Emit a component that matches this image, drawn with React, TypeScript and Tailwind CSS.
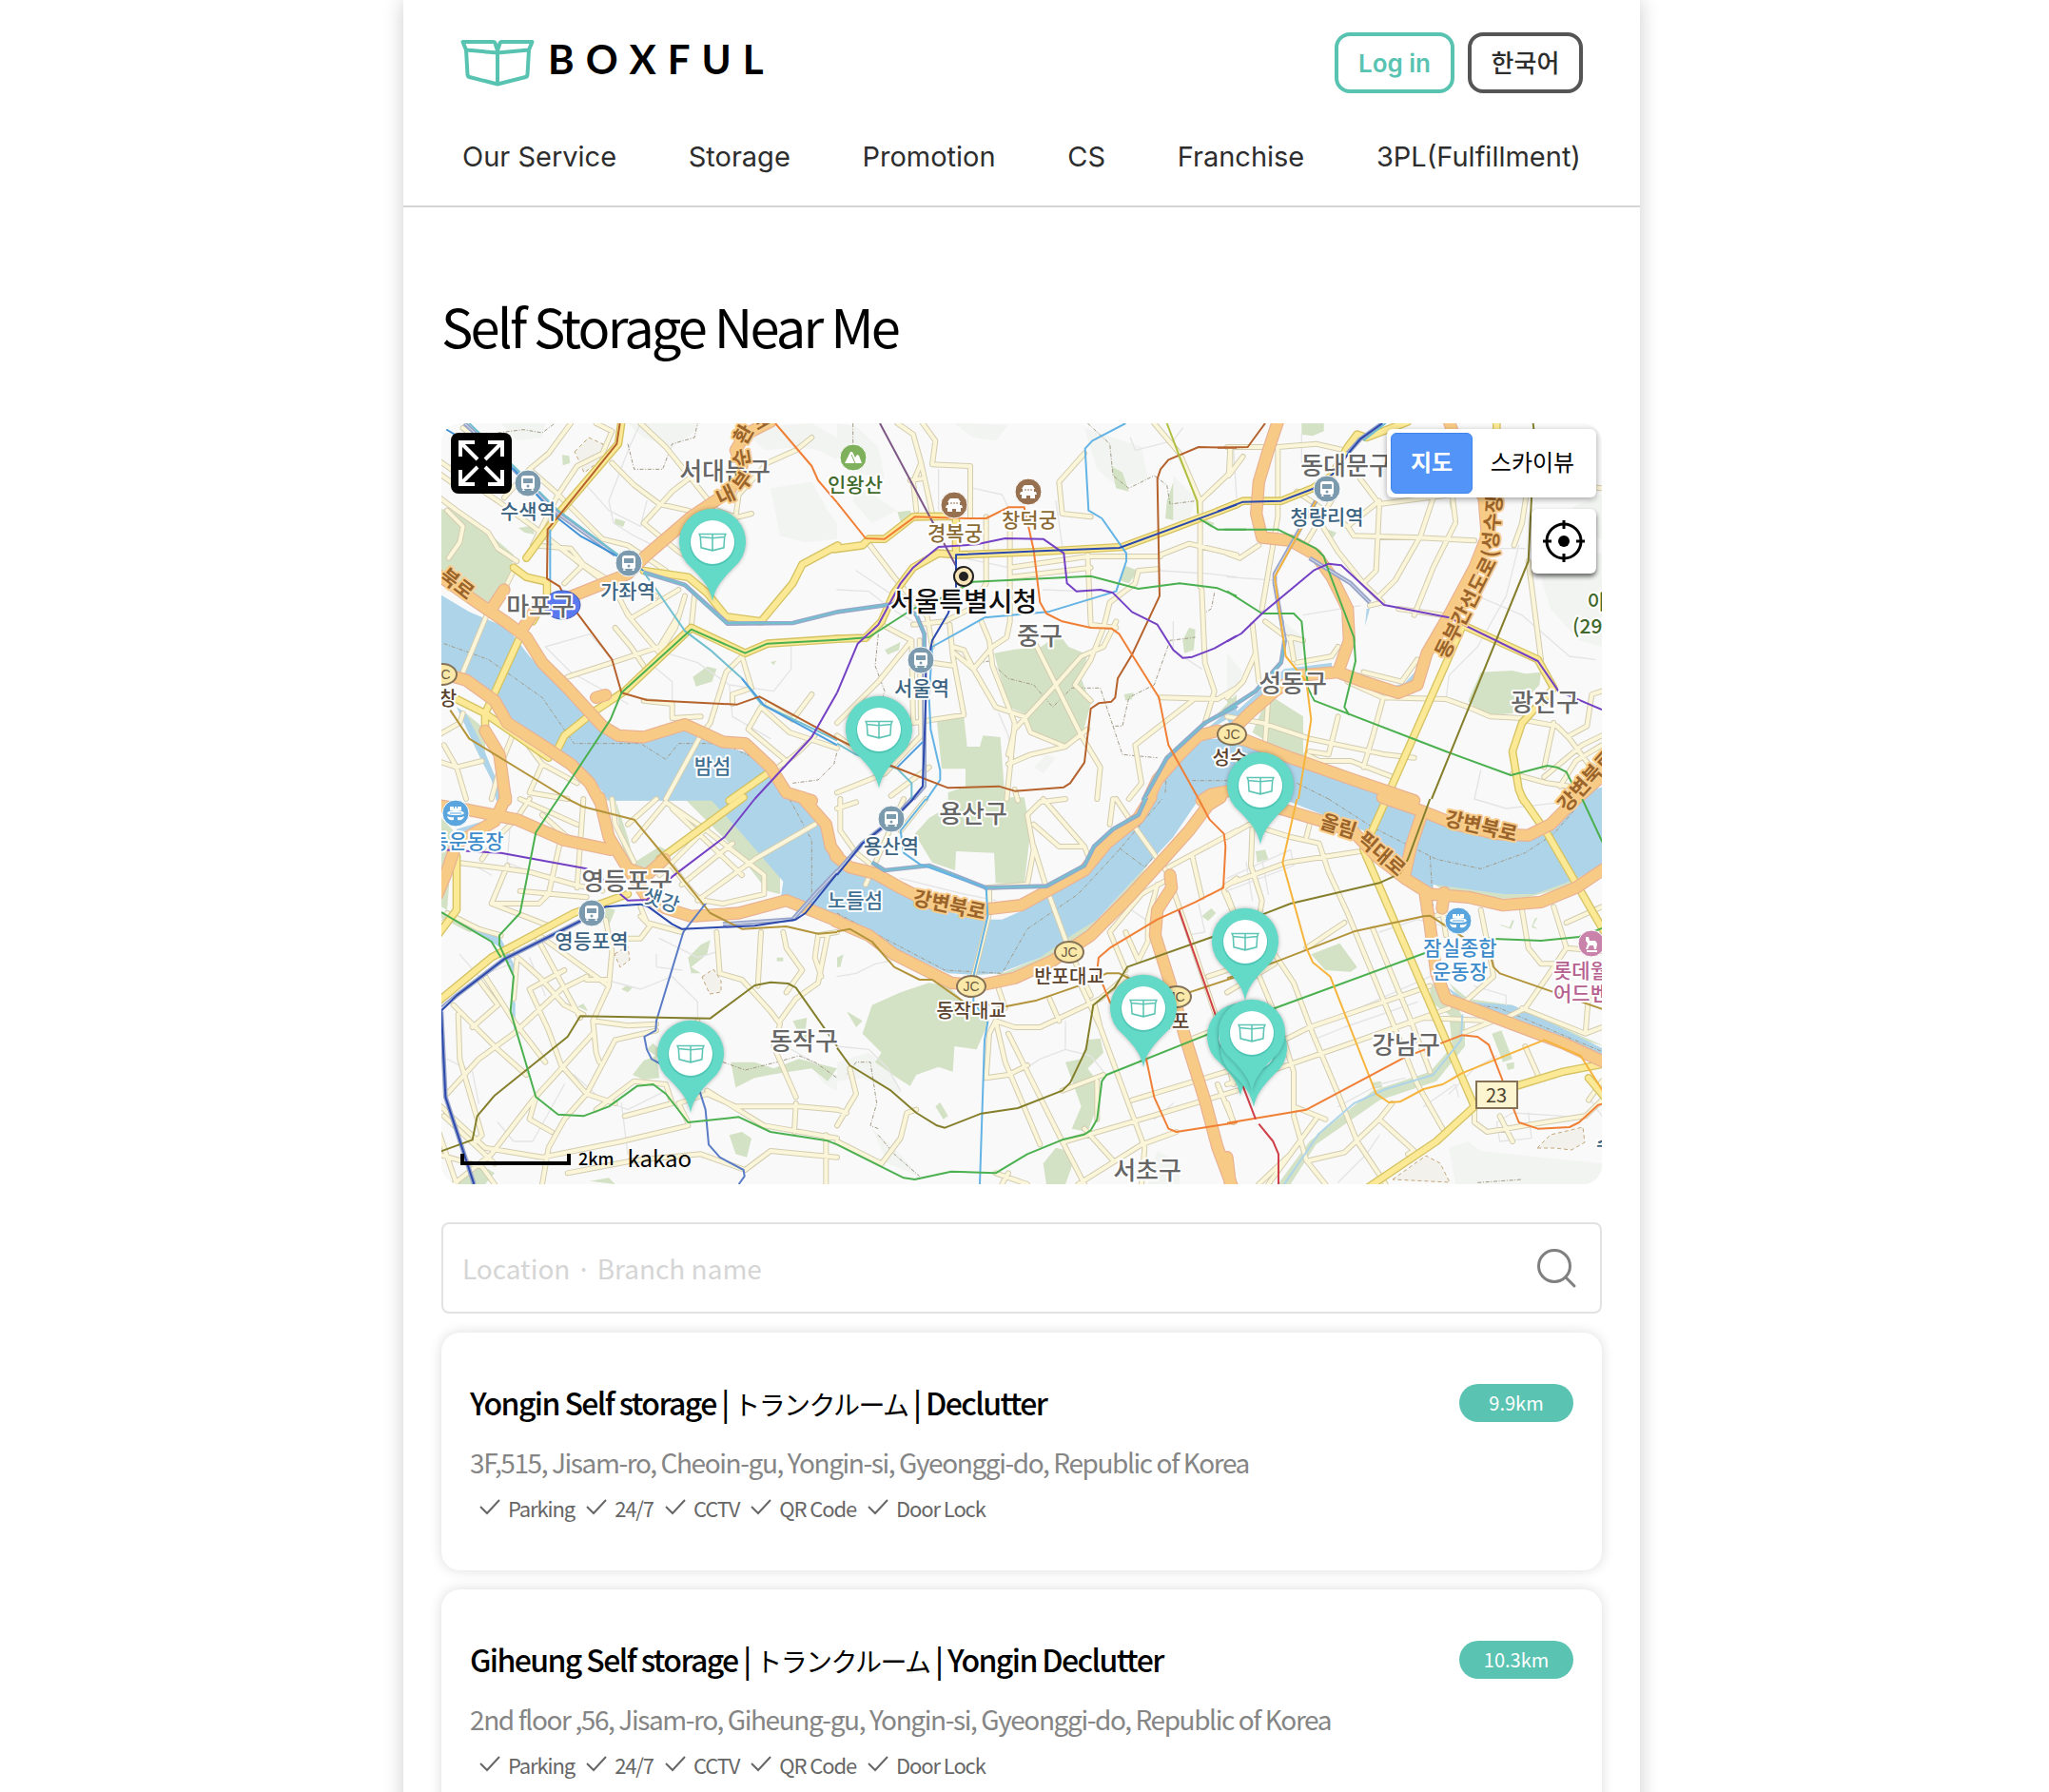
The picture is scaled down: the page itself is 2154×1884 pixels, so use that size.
import { useState } from 'react';

interface Tile {
  x: number;
  y: number;
  water?: string[];
  parks?: string[];
  hills?: string[];
  grey?: string[];
  minor?: string[];
  major?: string[];
  express?: string[];
  rail?: string[];
  dashed?: string[];
  lines?: [string, string][];
}

interface Label {
  text: string;
  x: number;
  y: number;
  kind: 'district' | 'station' | 'junction' | 'palace' | 'hill' | 'sport' | 'park' | 'road' | 'water';
  rotate?: number;
  start?: boolean;
}

interface Branch {
  name: string[];
  address: string;
  distance: string;
  features: string[];
}

const GREEN = '#4bb04f';
const NAVY = '#2c49ad';
const PURPLE = '#7440c4';
const BROWN = '#b5622c';
const SKY = '#63b3e4';
const ORANGE = '#f07f35';
const OLIVE = '#857f2c';
const GOLD = '#b3943a';
const AMBER = '#f6b43c';
const RED = '#cf4048';
const TEAL = '#72c0cf';
const SLATE = '#5a7cc6';

const menu = ['Our Service', 'Storage', 'Promotion', 'CS', 'Franchise', '3PL(Fulfillment)'];

const branches: Branch[] = [
  {
    name: ['Yongin Self storage | ', 'トランクルーム', ' | Declutter'],
    address: '3F,515, Jisam-ro, Cheoin-gu, Yongin-si, Gyeonggi-do, Republic of Korea',
    distance: '9.9km',
    features: ['Parking', '24/7', 'CCTV', 'QR Code', 'Door Lock'],
  },
  {
    name: ['Giheung Self storage | ', 'トランクルーム', ' | Yongin Declutter'],
    address: '2nd floor ,56, Jisam-ro, Giheung-gu, Yongin-si, Gyeonggi-do, Republic of Korea',
    distance: '10.3km',
    features: ['Parking', '24/7', 'CCTV', 'QR Code', 'Door Lock'],
  },
];

// Each tile is drawn at three times its size on the map
const tiles: Tile[] = [
  {
    x: -4,
    y: -5,
    water: [
      'M0 550L100 610 220 660 290 750 420 880 520 980 600 1015 780 985 900 1035 1000 1060 1080 1160 1120 1205 540 1205 500 1150 330 1040 230 960 180 880 90 815 0 790z',
      'M60 910L90 930 140 1030 190 1150 200 1205 185 1205 170 1140 120 1040z',
    ],
    parks: [
      'M0 285L60 290 170 370 240 430 225 540 190 600 110 570 0 470z',
      'M525 1160L560 1145 720 1170 900 1170 940 1205 530 1205z',
      'M290 950L320 945 400 1000 395 1020 360 1005z',
      'M805 815L850 782 880 790 865 830 815 845z',
      'M393 115L415 118 418 140 395 148z',
      'M255 345L300 338 305 365 275 360z',
      'M560 315L592 325 585 342 558 332z',
      'M225 670L260 710 300 780 370 850 420 890 300 770z',
      'M90 930L150 980 150 1100 110 1020z',
      'M1050 768L1068 764 1060 778z',
    ],
    hills: [
      'M960 30L1180 15 1260 60 1260 130 1200 100 1140 90 1030 100z',
      'M1050 220L1180 200 1230 290 1260 330 1260 380 1160 390 1080 370z',
      'M600 15L830 15 800 50 740 90 650 60z',
      'M200 15L340 15 330 60 250 70z',
    ],
    grey: [
      'M640 15L605 90 540 260 555 330 620 370 680 400',
      'M340 720L480 680 560 770 690 730',
      'M690 730L820 770 920 840 1060 860 1115 790 1115 720',
      'M580 860L680 780 740 830 740 900',
      'M340 720L420 800 600 900',
      'M920 840L930 940 1050 1010',
      'M460 200L540 290 640 340 660 260',
    ],
    minor: [
      'M0 130L100 200 190 260 300 340 440 450 560 540 600 620 700 740',
      'M0 170L70 220 160 90 80 30',
      'M0 245L60 290 160 360 190 410 250 450',
      'M30 290L80 340 70 390 35 440',
      'M420 15L350 110 290 160 210 250',
      'M290 160L370 230 440 300 520 380 600 400 720 480',
      'M500 15L550 40 520 110 440 150 380 240 300 400',
      'M550 140L620 210 700 270 790 290 870 330 990 300',
      'M640 15L720 90 800 190 880 290 940 310',
      'M650 330L740 230 830 160',
      'M650 330L760 420 860 480',
      'M1040 140L1130 100 1180 60',
      'M1040 140L950 240 940 310',
      'M400 520L460 460 420 410 300 400',
      'M460 460L540 510 690 560',
      'M760 540L610 630 590 600',
      'M560 660L610 720 650 780',
      'M780 560L750 660 700 740',
      'M810 560L800 660',
      'M410 815L580 760 700 720 760 620',
      'M960 750L910 800 860 960 830 1000 720 1200',
      'M960 750L990 850 930 870 930 900',
      'M650 890L740 900 740 945 830 940',
      'M1020 910L980 980 1100 1080 1060 1110',
      'M1020 910L1110 990 1260 1040',
      'M1180 870L1120 950 1040 900',
      'M1190 1000L1140 1050 1090 1090',
      'M240 480L210 540',
      'M155 620L80 800',
      'M0 1000L70 960 80 930',
      'M0 1080L60 1100 140 1080',
      'M20 1030L60 1100 90 1200',
      'M240 990L200 1090 170 1200',
      'M270 1010L330 1090 290 1180 410 1200',
      'M330 1090L440 1150',
    ],
    major: [
      'M580 10L570 80 390 290 280 440',
      'M240 470L280 500 345 515 345 560 300 640',
      'M255 700L150 930',
      'M60 885L150 930 350 1070',
      'M150 930L150 990',
      'M370 1060L400 1000 500 920 590 860 800 660 970 740 1040 710 1262 695',
      'M650 480L790 500 850 550 910 625 1020 640 1120 520 1150 460 1262 400',
      'M920 1205L1040 1120',
    ],
    express: [
      'M-10 485L110 570 220 645 280 690 330 770 410 850 520 970 570 1000 650 1005 780 965 900 1020 970 1025 1050 1100 1100 1180 1180 1205',
      'M270 660L310 600 400 570 600 490 660 430 800 310 920 230 960 150 940 100 970 50 1050 10',
      'M210 540L170 600',
      'M0 800L90 825 180 890 220 960 330 1030 420 1090 480 1150 510 1205',
      'M150 985L195 1060 215 1205',
      'M500 880L530 872',
    ],
    rail: ['M85 15L240 160 380 300 560 430', 'M650 485L780 525 915 647 1120 645 1262 610'],
    dashed: [
      'M20 710L160 760 330 880 430 1025 640 1025 720 1075 760 1025 900 1025 1040 1090',
      'M600 80L620 160 710 160 740 80 810 60 820 15',
      'M190 45L270 35 330 45 370 15',
      'M1120 1150L1200 1140 1250 1090 1260 1050',
    ],
    lines: [
      [SKY, 'M355 350L355 510'],
      ['#3f92d8', 'M20 30L240 160 380 315 450 370 560 430 650 480'],
      [TEAL, 'M100 15L250 160 380 290 570 430 M650 485L780 525 910 645 1120 645 1260 610'],
      [TEAL, 'M650 485L690 540 780 670 860 730 960 820 1020 900 1260 1015'],
      ['#4f9fe0', 'M960 820L1030 905 1260 1030'],
      [BROWN, 'M575 15L565 80 380 310 347 350 345 505 385 530 400 560 550 760 580 865 660 888 945 902 1015 877 1260 1010'],
      [GOLD, 'M40 920L100 1010 410 1200'],
      [GREEN, 'M1260 698L1040 710 970 740 800 665 580 865 545 950 380 1200'],
      [PURPLE, 'M1000 1200L1180 1005 1260 865'],
      [ORANGE, 'M1065 15L1180 150 1200 195 1260 265'],
    ],
  },
  {
    x: 416,
    y: -5,
    water: ['M1000 1205L1060 1090 1160 1010 1265 1010 1265 1150 1180 1175 1130 1205z', 'M1080 1050L1260 900 1260 930 1160 990z'],
    parks: [
      'M495 740L560 728 640 722 700 680 730 720 790 745 770 820 800 900 770 1010 720 1030 600 990 590 930 540 910z',
      'M315 955L400 940 410 1035 450 1035 460 1000 515 1005 530 1205 350 1205 350 1180 405 1160 405 1105 330 1105z',
      'M865 150L900 170 920 230 880 220z',
      'M1110 660L1130 665 1125 730 1095 740 1090 700z',
      'M910 465L950 480 920 520 890 510z',
      'M190 295L230 290 245 320 200 325z',
      'M905 870L935 865 930 885 910 890z',
      'M1040 260L1060 200 1060 320 1035 315z',
      'M1150 315L1190 330 1180 345z',
      'M1200 930L1260 870 1260 920 1210 940z',
      'M150 730L200 705 195 730 160 745z',
    ],
    hills: [
      'M0 15L60 25 130 90 150 190 60 170 0 120z',
      'M60 210L190 290 110 330 50 260z',
      'M370 15L540 20 500 70 430 60z',
      'M780 30L960 90 980 190 890 220 820 160z',
      'M1060 180L1130 250 1110 330 1060 320z',
      'M620 1100L660 1060 690 1070 650 1120z',
    ],
    grey: [
      'M320 160L320 290',
      'M430 220L520 240 540 280',
      'M690 260L710 400',
      'M925 60L940 100 1060 70 1090 30',
      'M0 540L100 545 170 600 240 640',
      'M60 480L180 560',
      'M400 440L540 470',
      'M1020 480L1180 490 1260 500',
      'M1060 640L1060 730 1150 790',
      'M510 930L540 1000 560 1080',
      'M650 540L780 545',
    ],
    minor: [
      'M190 15L240 50 265 140 300 300',
      'M270 15L310 70 300 145 420 150 420 310',
      'M265 140L240 200 250 290',
      'M230 195L265 190',
      'M100 395L180 500 280 620',
      'M200 560L280 600 300 720',
      'M470 310L470 520 420 600 340 640 240 650',
      'M545 310L545 640 535 690 490 720 430 790 400 730 365 720',
      'M545 470L790 435 1020 435',
      'M550 500L720 480 800 470',
      'M780 110L700 200 710 300 800 310',
      'M790 430L800 650 880 660',
      'M950 480L1010 475',
      'M950 480L940 520 860 580 840 660 800 760 750 840 800 890',
      'M1020 430L1110 395 1260 430',
      'M1000 15L1080 110 1145 260 1145 530',
      'M1240 90L1240 170 1145 260',
      'M1150 540L1160 770 1190 860 1160 960',
      'M1020 880L1200 885 1260 850',
      'M1120 890L1030 960 940 1030 960 1150 920 1200',
      'M620 700L700 860 770 1000 830 1100 820 1200',
      'M840 720L770 750 690 840 560 980 540 1060',
      'M455 640L480 700 490 780 560 960 535 1200',
      'M370 740L430 790 500 910 590 940 610 990 720 1035 790 980',
      'M540 1090L610 1060 720 1035',
      'M355 650L365 750 400 935 300 950',
      'M300 950L240 960 235 700 150 655',
      'M260 700L265 1000 150 1120 0 1180',
      'M0 960L130 830 235 700',
      'M300 770L370 780',
      'M0 1000L80 1060',
      'M170 1190L290 1100',
      'M840 720L880 640',
      'M560 1170L570 1205',
    ],
    major: [
      'M0 695L90 692 140 640 180 550 240 470 320 425 380 430 640 420 900 405 1050 350 1262 270',
      'M-10 412L80 400 100 380 150 380 240 310 370 308',
      'M375 320L375 420',
    ],
    express: ['M980 1205L1010 1140 1080 1060 1140 1000 1200 985 1262 1000', 'M1150 1205L1180 1185 1262 1170'],
    rail: ['M0 610L200 582 250 620 275 680 275 880', 'M965 1205L1040 1070 1160 960 1262 905', 'M275 880L275 1160 240 1200'],
    dashed: [
      'M50 15L50 80',
      'M790 15L860 80 870 180 920 220 1000 180 1040 210 1050 270 1130 260',
      'M130 680L120 780 150 860 130 920',
      'M420 775L480 765 540 820 620 840 680 910 740 850 830 850 870 970 900 970 920 880 1000 840 1050 700 1130 690',
      'M1190 550L1180 600 1150 620',
      'M870 970L900 1060 1010 1070',
      'M1120 1142L1260 1142',
      'M1035 1180L1040 1100',
    ],
    lines: [
      ['#7d5885', 'M135 15L375 465'],
      [TEAL, 'M0 610L200 582 250 620 275 680 275 760'],
      [SKY, 'M910 15L805 70 782 95 793 290 835 315 912 425 912 450 880 545 665 610 465 628 300 720 290 880 295 980 325 1110 325 1140 280 1205'],
      ['#4f9fe0', 'M270 1020L190 1100'],
      [TEAL, 'M0 1025L60 1060 190 1105 235 1150 235 1200'],
      [TEAL, 'M965 1205L1040 1070 1160 960 1260 907'],
      [BROWN, 'M0 1010L170 1095 350 1165 510 1160 560 1175 715 1163 735 1150 780 1085 800 915 825 898 865 893 877 880 885 820 930 745 1017 560 1010 190 1020 160 1045 130 1140 90 1260 92'],
      ['#b0bf3f', 'M1040 15L1080 120 1135 260 1138 300'],
      [GREEN, 'M0 698L100 690 240 600 320 570 380 540 430 515 800 497 950 537 1080 520 1200 535 1260 560'],
      [GREEN, 'M1140 315L1200 350 1290 350'],
      [ORANGE, 'M0 265L90 378 150 380 245 310 410 315 470 315 540 280 590 280 620 415 640 580 660 615 710 640 800 660 865 662 890 680 930 745 1015 880 1045 1030 1140 1200'],
      [PURPLE, 'M0 865L65 710 130 650 200 520 240 470 320 405 440 397 530 378 650 380 715 425 725 520 755 545 830 540 870 550 930 610 1010 650 1060 730 1090 755 1120 752 1190 725 1260 685'],
      [NAVY, 'M235 1205L270 1160 280 880 280 800 300 700 350 615 375 540 375 430 640 418 890 408 1260 272'],
    ],
  },
  {
    x: 826,
    y: -5,
    water: [
      'M-10 1000L60 1010 250 1090 540 1205 200 1205 0 1130z',
      'M0 950L100 860 180 790 330 770 330 790 220 820 110 900 20 980z',
      'M410 800L520 845 560 835 605 785 610 815 570 865 420 830z',
      'M150 560L175 640 185 720 165 770 180 640z',
      'M440 600L450 600 435 655z',
    ],
    parks: [
      'M235 15L305 15 305 40 270 55 235 50z',
      'M760 890L800 800 900 795 940 805 990 800 985 840 900 930 830 935 780 910z',
      'M130 870L240 940 240 1080 190 1060 80 990z',
      'M700 260L712 265 705 290z',
      'M320 350L345 360 335 375 315 365z',
      'M0 880L30 885 20 930 0 920z',
    ],
    hills: ['M990 500L1182 420 1182 720 1110 700 1020 600z', 'M1090 280L1182 240 1182 380 1110 360z', 'M0 740L50 800 20 880 0 860z', 'M180 640L250 700 230 760 190 740z'],
    grey: [
      'M235 50L235 160',
      'M20 90L30 250',
      'M0 500L150 510',
      'M240 620L420 590',
      'M790 560L930 620 1080 750 1160 760',
      'M920 400L880 560 790 720 700 810',
      'M860 410L940 410',
      'M800 1110L780 1200',
      'M700 810L690 890',
    ],
    minor: [
      'M0 90L160 90 280 80 370 100',
      'M10 90L5 180 50 120',
      'M160 90L160 310 110 600',
      'M0 425L40 440 100 400',
      'M420 190L480 270 710 240 720 320',
      'M380 340L400 370 590 375 780 385',
      'M380 340L480 260',
      'M220 230L380 340',
      'M340 240L250 390',
      'M270 290L350 420 430 520 490 580 450 590',
      'M480 270L470 480 430 520',
      'M480 560L530 510 610 370 650 250',
      'M720 330L650 470 590 620',
      'M540 600L680 620',
      'M990 200L1180 220',
      'M950 200L930 330 905 400',
      'M950 450L990 760',
      'M80 650L100 830 120 860',
      'M120 640L200 700 210 760',
      'M200 690L240 700',
      'M220 770L330 750 350 720',
      'M430 800L550 830 600 760',
      'M0 880L50 830 90 740',
      'M380 830L490 880 690 885 760 910 830 940 930 945',
      'M0 940L110 960 260 1010 500 1060 590 1070',
      'M130 880L120 1020',
      'M350 940L320 1060 260 1050',
      'M490 890L460 1000 430 1100',
      'M250 1060L290 1080 390 1080 520 1130',
      'M930 950L1040 970 1080 1010 1140 1090 1182 1110',
      'M1030 960L1000 1100',
      'M1182 860L1150 870 1135 970 1080 1000',
      'M1182 1000L1120 1030 1000 1130',
      'M1182 1030L1100 1080 1050 1160',
      'M900 1120L1010 1150 1080 1160',
    ],
    major: [
      'M-30 293L50 260 170 260 270 220 330 180 380 90 410 50 440 60 570 10',
      'M740 660L510 1180',
      'M740 650L980 760 1030 850 930 960 900 1050 920 1170 935 1205',
      'M850 10L850 40',
    ],
    express: [
      'M0 1000L70 930 150 860 230 810 350 800 385 700 380 600 330 500 280 430 200 385 110 375 92 300 100 200 130 100 160 10',
      'M350 800L430 830 540 865 600 840 630 740 700 620 780 470 820 370 810 250 750 150 700 10',
      'M0 1000L60 1015 200 1070 400 1140 590 1205',
    ],
    rail: ['M490 15L420 65 380 110', 'M280 260L150 490 150 520 182 700 170 770 90 860 -10 925', 'M260 440L390 520 450 580'],
    dashed: ['M220 1150L320 1200', 'M40 1160L100 1190'],
    lines: [
      [BROWN, 'M-30 92L65 90 120 15'],
      [TEAL, 'M182 700L170 770 90 860 -10 925 M500 15L430 70'],
      [GREEN, 'M-10 350L160 350 280 410 305 435 320 480 400 690 405 765 370 910 385 935'],
      [GREEN, 'M0 545L110 615 210 615 235 640 255 850 275 890 690 1050 895 1125 1010 1095 1040 1100 1070 1115 1090 1155'],
      [AMBER, 'M280 260L150 500 185 750 250 830 265 950 225 1200'],
      [OLIVE, 'M645 1200L950 450 960 250 980 150 965 15'],
      [PURPLE, 'M0 703L45 678 110 615 275 478 320 458 360 463 495 588 700 628 980 765 1045 860 1182 918'],
      [NAVY, 'M-30 293L50 263 170 260 270 222 340 170 390 100 420 65 490 15'],
    ],
  },
  {
    x: -4,
    y: 395,
    water: [
      'M830 -5L1150 -5 1230 120 1265 170 1265 390 1200 360 1080 330 1090 260 960 110 860 0z',
      'M100 390L200 440 240 520 240 560 200 470 90 400z',
      'M235 640L245 640 245 740 235 700z',
      'M60 95L160 65 170 75 60 110z',
    ],
    parks: [
      'M780 0L870 0 970 110 1080 240 1080 300 1040 290 940 160 830 50z',
      'M560 0L600 120 620 200 700 150 740 170 640 230 590 200z',
      'M0 350L60 370 150 410 100 420 0 370z',
      'M12 60L50 100 30 350 12 340z',
      'M615 870L650 825 690 810 700 880 650 885z',
      'M660 790L680 770 700 790 700 820z',
      'M925 830L1000 830 1060 850 1140 820 1260 850 1230 890 1180 850 1110 860 1050 870 1000 880 940 910z',
      'M920 1060L960 1050 990 1070 975 1130 940 1120z',
      'M790 500L830 460 860 445 850 490 800 530 830 550 800 550z',
      'M580 600L595 588 615 595 600 610z',
      'M440 655L460 645 475 670z',
      'M130 1150L180 1180 150 1215 40 1215z',
      'M480 1205L540 1195 560 1215z',
      'M530 340L560 350 540 400 525 400z',
      'M1070 500L1090 500 1090 512 1070 512z',
      'M1120 700L1165 690 1160 730 1190 740 1150 760z',
    ],
    hills: ['M1180 850L1260 870 1260 920 1220 900z'],
    grey: [
      'M230 60L220 200 290 230',
      'M70 490L130 560 230 520',
      'M290 500L340 620',
      'M530 570L640 600 740 560 820 640 820 700',
      'M690 490L690 530 770 540',
      'M430 870L520 950 600 980 720 920',
      'M190 1020L240 1080 300 1080 400 900',
      'M580 960L600 1120',
      'M700 440L820 500 890 480',
      'M30 820L110 860 130 960',
      'M100 200L170 240',
      'M1100 780L1200 840',
    ],
    minor: [
      'M60 200L290 230 430 270 520 290',
      'M140 190L180 130 250 60 290 0',
      'M220 210L170 330 300 380 350 400',
      'M390 120L350 300 320 330 180 330',
      'M460 0L440 280',
      'M260 0L440 80',
      'M330 50L420 130',
      'M260 290L470 310',
      'M30 360L130 410 200 430',
      'M0 400L50 370',
      'M320 430L540 590 550 480 530 380',
      'M310 430L450 690',
      'M230 480L320 560 400 650 460 680',
      'M150 560L240 700 340 830',
      'M130 570L190 650 110 720',
      'M470 560L390 600 240 740 130 820 30 930',
      'M290 600L350 730 390 840 470 930 560 960',
      'M540 590L490 700 500 800 510 830',
      'M470 570L540 570',
      'M290 600L400 540',
      'M50 650L120 720 190 790 280 870',
      'M65 680L70 820 140 1060 120 1080',
      'M250 510L240 630',
      'M490 700L600 715 690 710',
      'M560 760L690 730',
      'M560 760L470 930 400 1010 350 1100 330 1215',
      'M490 740L300 950 170 1120 50 1215',
      'M0 960L150 1100 330 1130 580 1080 790 1030',
      'M20 1000L180 1150',
      'M310 940L290 1010 360 1050',
      'M590 1000L740 960 720 900 620 890 500 980',
      'M410 1180L620 1140 830 1120 970 1170 1050 1110 1260 1130',
      'M790 1020L760 960 850 930 940 970 1140 970 1260 980',
      'M1130 960L1125 1050',
      'M850 920L1030 1030 1260 1070',
      'M820 700L820 760',
      'M880 420L890 550 960 570 1050 670 1080 710 1060 780 1130 940',
      'M1020 420L1010 590',
      'M1080 700L1130 630 1200 580 1230 430',
      'M1090 420L1100 470 1150 540 1100 610',
      'M1260 420L1200 430 1190 500 1210 560',
      'M640 370L670 400 640 440 560 440',
      'M640 340L660 390 770 420',
      'M600 80L690 0',
      'M620 130L720 10 850 100 1030 240 1030 300 900 330 840 320',
      'M850 90L700 240',
      'M740 30L960 240',
      'M770 270L930 140',
      'M820 320L1000 190 1190 80',
      'M550 0L560 80 620 200',
      'M730 200L800 290 840 330',
      'M1225 1060L1225 1215',
      'M0 1040L60 1215',
      'M0 1120L140 1160 180 1215',
    ],
    major: ['M0 640L170 500 430 360 600 300', 'M700 190L965 -5', 'M60 180L60 350 0 430'],
    express: [
      'M0 20L100 35 250 65 400 130 545 160',
      'M215 -5L180 70 60 140 25 240 0 300',
      'M510 -5L540 120 600 220 660 310 720 345 800 370 950 360 1100 320 1262 385',
      'M600 220L660 240 715 190',
      'M1150 -5L1225 80 1240 150 1262 180',
    ],
    rail: ['M0 670L60 620 210 505 450 385', 'M900 395L1120 380 1200 290 1262 225', 'M12 670L25 940 115 1215'],
    dashed: ['M1110 0L1180 130 1180 330', 'M900 830L970 855 1070 830 1140 810 1190 830 1260 880'],
    lines: [
      [PURPLE, 'M12 160L200 170 470 220 530 260 600 320 660 318 740 245 905 120 1000 0'],
      [GOLD, 'M410 0L460 25 620 65 740 210 860 360 960 410 1100 402 1200 425 1260 420'],
      [SLATE, 'M845 330L775 420 690 700 688 730 652 750 660 790 675 820 820 900 845 980 855 1090 890 1130 965 1170 968 1190 950 1215'],
      [OLIVE, 'M0 1115L110 1075 125 1000 180 935 410 750 450 685 860 692 1000 588 1050 578 1105 582 1130 595 1260 780'],
      [GREEN, 'M12 357L170 450 200 500'],
      [GREEN, 'M380 0L310 105 260 360 195 430 195 460 240 560 230 670 310 940 380 995 460 1000 540 970 630 905 680 900 720 930 790 1020 950 1003 1050 1050 1230 1078 1260 1090'],
      [NAVY, 'M0 680L60 620 210 505 450 385 530 340 640 332 665 340 740 395 770 410 1000 400 1130 380 1160 360 1260 235'],
      [NAVY, 'M12 670L25 940 115 1215'],
    ],
  },
  {
    x: 416,
    y: 395,
    water: [
      'M-5 170L200 290 330 350 450 380 520 380 600 345 700 290 790 230 860 140 950 70 1000 -5 1145 -5 1060 120 940 250 820 380 740 430 640 500 510 550 440 555 350 550 200 480 100 420 -5 365z',
    ],
    parks: [
      'M290 60L400 -5 590 -5 610 100 590 270 500 265 495 170 375 165 372 225 300 200 245 110z',
      'M80 740L110 650 200 610 290 580 350 590 400 640 480 700 440 790 370 780 365 860 320 845 250 870 230 905 190 880 120 830 140 800z',
      'M350 520L520 550 640 500 650 470 740 420 830 370 930 260 1000 180 900 320 800 420 650 510 540 560z',
      'M720 830L770 820 790 760 830 755 840 800 790 850 820 890 820 970 790 1050 740 1040 770 970z',
      'M690 1100L730 1110 740 1160 720 1215 660 1215 650 1150z',
      'M1150 370L1180 345 1195 360 1170 385z',
      'M310 970L325 957 350 1000 335 1010z',
      'M30 670L80 700 60 720z',
      'M0 500L20 490 10 530 0 530z',
      'M0 290L30 290 20 310 0 310z',
    ],
    hills: ['M0 830L100 800 180 870 200 930 80 880 0 890z', 'M1010 1110L1080 1150 1080 1215 980 1215z', 'M110 1040L180 1100 260 1190 160 1150z'],
    grey: [
      'M0 560L60 550 120 520 170 510',
      'M0 780L100 790 160 850 200 920',
      'M200 250L400 300 500 320',
      'M720 700L720 790 640 820 580 860',
      'M900 330L1000 400',
      'M1140 330L1160 420 1100 430',
      'M720 790L800 810 840 860',
      'M1000 1010L1060 960',
    ],
    minor: [
      'M10 0L10 100 60 170 110 210',
      'M210 0L130 180 90 270',
      'M280 0L240 50 200 100',
      'M0 30L60 10',
      'M600 50L620 160 600 270',
      'M600 50L640 10 720 0',
      'M620 80L700 150 780 150 800 200',
      'M620 150L660 280 730 470 800 620',
      'M650 0L780 150',
      'M860 80L870 0',
      'M880 0L940 90 1040 230 1110 430 1200 700 1250 900',
      'M1045 215L1260 100',
      'M1120 180L1150 310',
      'M860 420L960 300 1050 250',
      'M860 420L910 540',
      'M910 420L950 510 980 450 980 380 1010 270',
      'M1220 290L1250 360 1260 400',
      'M510 600L530 660',
      'M670 630L700 700',
      'M500 700L560 720 640 720 830 630 910 560',
      'M500 700L480 740 470 880 540 870 600 840',
      'M500 700L530 830 640 1090',
      'M540 740L620 900 700 1060 780 1215',
      'M810 640L830 720 970 1100 960 1215',
      'M770 590L830 720',
      'M710 920L840 870',
      'M720 1080L960 1010 1260 920',
      'M780 1040L870 1140',
      'M930 950L1260 850',
      'M1070 1050L960 1090 760 1215',
      'M820 890L820 1010',
      'M1110 760L1260 700',
      'M1200 900L1250 1020',
      'M0 1080L140 1150 200 1070 220 990 250 980',
      'M40 850L60 930 0 1030',
      'M0 980L30 990',
      'M500 1180L600 1215',
      'M540 1180L520 1215',
      'M480 285L480 360 430 560',
      'M470 280L600 270',
      'M1260 250L1220 280',
      'M1170 560L1260 530',
    ],
    express: [
      'M-5 180L40 215 120 235 200 280 300 330 450 350 580 335 700 270 780 225 850 140 950 60 990 -5',
      'M-5 385L100 430 180 490 280 540 360 580 450 588 560 565 680 510 800 430 920 310 1020 200 1110 100 1170 20 1210 -5',
      'M1050 240L1055 280 1010 350 1003 430 1050 580 1100 760 1160 950 1200 1100 1245 1220',
    ],
    rail: ['M-5 235L80 140 180 60 240 -5', 'M110 200L150 225 290 210 470 280 660 275 780 210 810 150 870 95 950 50 975 -5'],
    dashed: [
      'M0 360L150 440 340 540 520 550 600 410 760 300 890 160 1025 0',
      'M890 155L970 215 1000 180',
      'M130 1040L105 1030 125 960 105 830 60 830 30 870',
      'M130 1060L180 1120 260 1190',
    ],
    lines: [
      [TEAL, 'M110 200L150 225 290 210 470 280 660 275 780 210 810 150 870 95 950 50 975 0'],
      [SKY, 'M280 0L200 100 210 170 260 205 470 280 475 370 430 560 430 640 475 705 465 760 450 1215'],
      [GOLD, 'M0 418L40 410 110 450 180 530 260 570 300 570 400 640 530 655 630 635 760 590 850 550 890 550 930 570 M1110 610L1262 560'],
      [OLIVE, 'M0 785L40 840 170 920 250 990 315 1030 340 1037 455 992 570 975 710 920 735 895 785 790 808 650 875 595 915 530 1240 415'],
      [RED, 'M1078 350L1200 700 1280 900'],
      [GREEN, 'M0 1090L210 1195 245 1200 360 1175 500 1180 600 1120 710 1075 780 1058 800 1045 820 1010 835 890 850 870 1262 705'],
      [ORANGE, 'M1140 0L1175 65 1220 110 1225 150 1218 280 1130 325 1010 380 860 470 825 500 820 540 860 640 975 820 1000 940 1045 1040 1070 1050 1262 1020'],
      [NAVY, 'M0 240L80 140 180 60 240 0'],
    ],
  },
  {
    x: 826,
    y: 395,
    water: [
      'M150 -10L490 -10 620 50 700 90 850 120 960 120 1030 80 1100 20 1100 -10 1190 -40 1190 210 1080 260 970 300 870 300 650 270 640 500 700 610 650 540 630 300 580 240 540 200 430 100 200 10z',
      'M690 590L760 640 900 650 1050 720 1190 790 1190 815 1050 750 880 680 740 650z',
    ],
    parks: [
      'M265 490L355 455 410 530 390 545 310 540z',
      'M500 -5L620 50 700 95 850 130 780 130 620 80 560 60z',
      'M650 265L870 300 1080 260 1190 200 1100 270 950 310 860 315 680 290z',
      'M640 580L700 610 750 700 750 780 660 890 480 950 280 1090 200 1215 160 1215 260 1080 460 920 640 860 710 780 700 680 640 640z',
      'M700 580L760 630 900 650 1190 780 1050 740 860 680 740 640z',
      'M835 740L865 730 900 820 870 830z',
      'M880 835L905 830 905 850 885 855z',
      'M90 165L120 160 130 190 95 200z',
      'M860 395L890 405 900 380 905 385 895 410 865 400z',
      'M970 378L980 372 965 400 980 410 960 405z',
      'M455 895L485 890 490 910 460 915z',
    ],
    hills: ['M700 1100L760 1080 800 1110 990 1130 1182 1150 1182 1215 720 1215z'],
    grey: [
      'M0 290L210 210 200 160 0 250',
      'M60 200L80 320 M110 190L130 300 M0 270L180 210',
      'M270 760L370 720 600 640',
      'M370 680L640 560',
      'M480 420L600 380 680 400',
      'M350 970L480 900 560 880',
      'M780 590L880 620 880 650',
      'M860 1080L850 1020 900 990 1060 1000 1110 1010',
      'M860 1080L960 1070 950 990',
      'M700 930L780 850 850 810',
      'M780 0L880 30 1060 10',
      'M1140 940L1182 1000',
      'M620 970L720 900 730 940',
      'M350 1210L440 1120 480 1060',
    ],
    minor: [
      'M0 120L70 80 200 120 290 140 320 230 380 360 520 700 600 900 680 1040',
      'M80 80L75 210 110 320 100 380',
      'M0 270L190 200 420 165',
      'M260 80L250 120',
      'M0 300L60 460 160 700 210 860 210 990',
      'M150 490L210 580 270 740 350 930 410 1080 500 1215',
      'M0 610L150 520',
      'M180 760L260 720 640 590',
      'M0 900L160 850 420 760 700 660',
      'M370 390L250 470',
      'M460 410L580 700 640 860',
      'M420 760L620 690 840 700 740 740',
      'M620 350L650 370 690 360',
      'M680 360L690 430',
      'M800 350L820 450',
      'M930 350L950 470 990 520 1060 520',
      'M1030 340L1070 470 1010 560 940 660 880 690',
      'M1182 340L1070 390',
      'M1070 470L1182 480',
      'M750 640L840 560 820 440',
      'M1140 620L1130 740 1182 720',
      'M930 660L1130 740',
      'M940 780L980 870',
      'M780 960L780 1020 820 1050 1000 1020 1130 1000 1182 950',
      'M900 1080L860 1000',
      'M130 1215L280 1010',
      'M100 1215L200 1120',
      'M210 1000L250 1140 310 1215',
      'M260 1140L370 1115 480 1010 520 960',
      'M480 1010L590 1110 570 1120',
      'M0 960L20 1020',
      'M210 970L310 1010',
      'M1140 950L1182 890',
    ],
    major: ['M505 -5L430 160 780 970 660 1080 445 1225', 'M890 912L1060 860 1190 835', 'M930 -5L1010 110 1190 420', 'M1140 880L1190 940'],
    express: [
      'M80 5L200 40 300 70 400 105 470 180 560 250 640 300 760 310 870 335 990 325 1100 280 1190 220',
      'M490 -5L620 40 720 80 850 110 950 115 1020 80 1090 10 1190 -80',
      'M615 45L580 150 560 240',
      'M625 305L640 400 660 550 690 630 770 660 900 710 1060 770 1190 830',
      'M685 295L678 345',
      'M0 1130L10 1215',
    ],
    dashed: ['M320 0L460 90 640 180 660 190 800 220 940 170 1030 110 1100 30', 'M640 180L655 430', 'M720 640L860 660 1190 800', 'M790 1210L930 1200'],
    lines: [
      ['#aed4e9', 'M742 680L738 760 650 870 500 915 400 960 290 1055 180 1215'],
      [GOLD, 'M0 565L150 515 400 418 620 370 640 368 750 440 820 450 840 530 860 550 1190 665'],
      [OLIVE, 'M110 365L200 330 480 265 545 235 570 190 640 0'],
      [GREEN, 'M0 720L150 660 640 480 M820 440L990 447 1110 435 1190 405 M1120 0L1190 150'],
      [AMBER, 'M220 0L175 200 250 470 270 515 325 560 470 930 510 957 545 955 620 915 680 900 740 865 1000 760 1115 810 1190 930'],
      [ORANGE, 'M0 1022L250 980 560 815 740 745 790 750 825 775 920 1020 980 1040 1080 1035 1110 1020 1170 965 1190 960'],
      [RED, 'M40 880L90 1010 M100 1025L145 1080 162 1120 162 1215'],
    ],
  },
];

const labels: Label[] = [
  { text: '서대문구', x: 298, y: 50, kind: 'district' },
  { text: '마포구', x: 104, y: 192, kind: 'district' },
  { text: '중구', x: 629, y: 223, kind: 'district' },
  { text: '용산구', x: 559, y: 410, kind: 'district' },
  { text: '동대문구', x: 951, y: 44, kind: 'district' },
  { text: '성동구', x: 895, y: 273, kind: 'district' },
  { text: '광진구', x: 1160, y: 293, kind: 'district' },
  { text: '영등포구', x: 195, y: 481, kind: 'district' },
  { text: '동작구', x: 381, y: 649, kind: 'district' },
  { text: '서초구', x: 742, y: 785, kind: 'district' },
  { text: '강남구', x: 1014, y: 653, kind: 'district' },
  { text: '수색역', x: 91, y: 93, kind: 'station' },
  { text: '가좌역', x: 196, y: 177, kind: 'station' },
  { text: '서울역', x: 505, y: 279, kind: 'station' },
  { text: '용산역', x: 473, y: 445, kind: 'station' },
  { text: '청량리역', x: 931, y: 99, kind: 'station' },
  { text: '영등포역', x: 158, y: 545, kind: 'station' },
  { text: '수서역', x: 1214, y: 758, kind: 'station', start: true },
  { text: '밤섬', x: 285, y: 361, kind: 'water' },
  { text: '노들섬', x: 435, y: 502, kind: 'water' },
  { text: '샛강', x: 231, y: 502, kind: 'water', rotate: 18 },
  { text: '인왕산', x: 435, y: 65, kind: 'hill' },
  { text: '아차산', x: 1205, y: 188, kind: 'hill', start: true },
  { text: '(295.7m)', x: 1189, y: 214, kind: 'hill', start: true },
  { text: '경복궁', x: 540, y: 116, kind: 'palace' },
  { text: '창덕궁', x: 618, y: 102, kind: 'palace' },
  { text: '반포대교', x: 660, y: 582, kind: 'junction' },
  { text: '동작대교', x: 557, y: 618, kind: 'junction' },
  { text: '성수', x: 829, y: 352, kind: 'junction' },
  { text: '반포', x: 768, y: 629, kind: 'junction' },
  { text: '창', x: 7, y: 290, kind: 'junction' },
  { text: '동운동장', x: 27, y: 440, kind: 'sport' },
  { text: '잠실종합', x: 1071, y: 552, kind: 'sport' },
  { text: '운동장', x: 1071, y: 577, kind: 'sport' },
  { text: '롯데월드', x: 1169, y: 576, kind: 'park', start: true },
  { text: '어드벤처', x: 1169, y: 600, kind: 'park', start: true },
  { text: '내', x: 299, y: 76, kind: 'road', rotate: -25 },
  { text: '부', x: 317, y: 61, kind: 'road', rotate: -55 },
  { text: '순', x: 316, y: 36, kind: 'road', rotate: -100 },
  { text: '환', x: 318, y: 12, kind: 'road', rotate: -60 },
  { text: '로', x: 337, y: -3, kind: 'road', rotate: -30 },
  { text: '강변북로', x: 534, y: 507, kind: 'road', rotate: 12 },
  { text: '올림', x: 943, y: 424, kind: 'road', rotate: 18 },
  { text: '픽대로', x: 988, y: 453, kind: 'road', rotate: 41 },
  { text: '강변북로', x: 1093, y: 424, kind: 'road', rotate: 13 },
  { text: '강변북로', x: 1178, y: 405, kind: 'road', rotate: -48, start: true },
  { text: '동부간선도로', x: 1077, y: 194, kind: 'road', rotate: -63 },
  { text: '(성수장', x: 1105, y: 108, kind: 'road', rotate: -85 },
  { text: '북로', x: 16, y: 169, kind: 'road', rotate: 38 },
];

const labelStyle: Record<Label['kind'], string> = {
  district: 'fill-[#666666] stroke-white text-[26px] font-medium',
  station: 'fill-[#3c6482] stroke-white text-[21px] font-medium',
  water: 'fill-[#3f6f92] stroke-white text-[21px] font-medium',
  junction: 'fill-[#5b432f] stroke-white text-[20px] font-medium',
  palace: 'fill-[#8b6b35] stroke-white text-[21px] font-medium',
  hill: 'fill-[#41692b] stroke-white text-[21px] font-medium',
  sport: 'fill-[#3f8ccb] stroke-white text-[21px] font-medium',
  park: 'fill-[#b5608f] stroke-white text-[21px] font-medium',
  road: 'fill-[#9a642a] stroke-[#f9cd8b] text-[21px] font-bold',
};

const stations = [[91, 63], [197, 147], [504, 249], [473, 416], [931, 69], [158, 515]];
const palaces = [[539, 86], [617, 72]];
const stadiums = [[15, 410], [1069, 523]];
const junctions = [[831, 327], [660, 556], [557, 592], [773, 603], [1, 264]];

const pins = [
  { name: 'Seodaemun', x: 285, y: 186 },
  { name: 'Mapo', x: 460, y: 383 },
  { name: 'Apgujeong', x: 861, y: 442 },
  { name: 'Nonhyeon', x: 845, y: 606 },
  { name: 'Seocho', x: 738, y: 676 },
  { name: 'Gangnam 1', x: 840, y: 706 },
  { name: 'Gangnam 2', x: 854, y: 718 },
  { name: 'Gangnam 3', x: 852, y: 702 },
  { name: 'Sillim', x: 262, y: 724 },
];

function BoxMark({ className, stroke }: { className: string; stroke: number }) {
  return (
    <svg className={className} viewBox="0 0 78 50" fill="none" stroke="currentColor" strokeWidth={stroke} strokeLinejoin="round" strokeLinecap="round">
      <path d="M2.500 3H34.500Q36 3 36.500 4.500L39 12 41.500 4.500Q42 3 43.500 3H75.500L72 11.500 39 14.500 6 11.500z" />
      <path d="M6 11.500L7.500 37.500Q7.700 39.500 9.500 40L39 47.500 68.500 40Q70.300 39.500 70.500 37.500L72 11.500" />
      <path d="M39 14.500V47" />
    </svg>
  );
}

function TileLayer({ field, stroke, width, cap = 'round' }: { field: 'grey' | 'minor' | 'major' | 'express' | 'rail'; stroke: string; width: number; cap?: 'round' | 'butt' }) {
  return (
    <g fill="none" stroke={stroke} strokeWidth={width} strokeLinejoin="round" strokeLinecap={cap}>
      {tiles.map((tile, i) => (
        <g key={i} transform={`translate(${tile.x} ${tile.y}) scale(${1 / 3})`}>
          <path d={(tile[field] ?? []).join('')} />
        </g>
      ))}
    </g>
  );
}

function TileFill({ field, fill }: { field: 'water' | 'parks' | 'hills'; fill: string }) {
  return (
    <g fill={fill}>
      {tiles.map((tile, i) => (
        <g key={i} transform={`translate(${tile.x} ${tile.y}) scale(${1 / 3})`}>
          {(tile[field] ?? []).map((d) => (
            <path key={d} d={d} />
          ))}
        </g>
      ))}
    </g>
  );
}

function MapDrawing() {
  return (
    <svg className="absolute inset-0 h-full w-full font-['Noto_Sans_CJK_KR',sans-serif]" viewBox="0 0 1220 800" preserveAspectRatio="xMidYMid slice">
      <rect width="1220" height="800" fill="#f9f9f9" />
      <TileFill field="hills" fill="#f1f4f0" />
      <TileFill field="parks" fill="#d3e1c4" />
      <TileFill field="water" fill="#aed4e9" />
      <TileLayer field="grey" stroke="#e4e4e4" width={4} />
      <g fill="none" stroke="#a39a86" strokeWidth={3} strokeDasharray="12 5 3 5">
        {tiles.map((tile, i) => (
          <g key={i} transform={`translate(${tile.x} ${tile.y}) scale(${1 / 3})`}>
            <path d={(tile.dashed ?? []).join('')} />
          </g>
        ))}
      </g>
      <g fill="#f3f1ec" stroke="#c2a77a" strokeWidth="1" strokeDasharray="4 3">
        <path d="M140 30L155 15 170 22 166 40 150 52 144 38z" />
        <path d="M182 558L196 550 198 564 188 572z" />
        <path d="M274 582L286 574 294 586 294 598 282 600z" />
        <path d="M1152 762L1166 748 1200 740 1202 756 1188 764 1170 762z" />
        <path d="M1000 795L1035 770 1050 778 1060 798z" />
      </g>
      <TileLayer field="minor" stroke="#d3ccb0" width={18} />
      <TileLayer field="minor" stroke="#fbf6da" width={12} />
      <TileLayer field="major" stroke="#d5c262" width={26} />
      <TileLayer field="major" stroke="#fce996" width={18} />
      <TileLayer field="express" stroke="#e9b192" width={40} />
      <TileLayer field="express" stroke="#f7ca86" width={33} />
      <TileLayer field="rail" stroke="#9aa6c9" width={14} cap="butt" />
      <TileLayer field="rail" stroke="#dfe6f2" width={3} cap="butt" />
      {tiles.map((tile, i) => (
        <g key={i} transform={`translate(${tile.x} ${tile.y}) scale(${1 / 3})`} fill="none" strokeWidth={6} strokeLinejoin="round">
          {(tile.lines ?? []).map(([color, d]) => (
            <path key={d} d={d} stroke={color} />
          ))}
        </g>
      ))}

      <ellipse cx="127" cy="191" rx="19" ry="15" fill="#5b79ee" stroke="#3d57b8" />
      {junctions.map(([x, y]) => (
        <g key={x}>
          <ellipse cx={x} cy={y} rx="15" ry="11" fill="#fae9a8" stroke="#857257" strokeWidth="2" />
          <text x={x} y={y} textAnchor="middle" dominantBaseline="central" className="fill-[#6d5a41] font-['Liberation_Sans',sans-serif] text-[14px]">JC</text>
        </g>
      ))}
      {labels.map((label) => (
        <text
          key={`${label.text}${label.x}`}
          y="-2"
          transform={`translate(${label.x} ${label.y}) rotate(${label.rotate ?? 0})`}
          textAnchor={label.start ? 'start' : 'middle'}
          dominantBaseline="central"
          strokeWidth="4"
          strokeLinejoin="round"
          paintOrder="stroke"
          className={labelStyle[label.kind]}
        >
          {label.text}
        </text>
      ))}
      {stations.map(([x, y]) => (
        <g key={x} transform={`translate(${x} ${y})`}>
          <circle r="14" fill="#7b9aae" stroke="#fff" />
          <path d="M-7 -5Q-7 -8 -4 -8H4Q7 -8 7 -5V4Q7 6 5 6H-5Q-7 6 -7 4z" fill="#fff" />
          <path d="M-5 -5H5V0H-5z" fill="#7b9aae" />
          <circle cy="3" r="1.500" fill="#7b9aae" />
          <path d="M-5 5L-6 8H-3zM5 5L6 8H3z" fill="#fff" />
        </g>
      ))}
      {palaces.map(([x, y]) => (
        <g key={x} transform={`translate(${x} ${y})`}>
          <circle r="14" fill="#96704f" stroke="#fff" />
          <path d="M-5 -6L-4 -7H4L5 -6 7 -3H6V0H8L9 3H7V7H2V4H-2V7H-7V3H-9L-8 0H-6V-3H-7z" fill="#fff" />
          <path d="M-3 -3V-1M0 -3V-1M3 -3V-1" stroke="#96704f" strokeWidth="1" />
        </g>
      ))}
      {stadiums.map(([x, y]) => (
        <g key={x} transform={`translate(${x} ${y})`}>
          <circle r="14" fill="#5ba5de" stroke="#fff" />
          <path d="M-6 -7H-2V-5H-1V-7H1V-5H2V-7H6V-3H-6zM-9 0Q-8 -3 0 -3 8 -3 9 0 8 2 0 2 -8 2 -9 0zM-9 3Q-5 5 -2 4V7Q-8 8 -9 3zM9 3Q5 5 2 4V7Q8 8 9 3z" fill="#fff" />
          <path d="M-6 0H6" stroke="#5ba5de" />
        </g>
      ))}
      <g transform="translate(433 36)">
        <circle r="14" fill="#7fb05c" stroke="#fff" />
        <path d="M-9 6L-4 -4 -3 -6 -1 -6 2 0 4 -3 6 -2 9 6z" fill="#fff" />
        <path d="M-2 -3L2 6" stroke="#7fb05c" />
      </g>
      <g transform="translate(1209 547)">
        <circle r="14" fill="#c983aa" stroke="#fff" />
        <path d="M-6 -7L-3 -7 -2 -3 4 -3 6 0 5 6H3L2 2H-2L-4 6H-6L-4 0 -6 -3zM-5 7H6V9H-5z" fill="#fff" />
      </g>
      <g transform="translate(549 161)">
        <circle r="10" fill="#f9e6b8" stroke="#222" strokeWidth="2" />
        <circle r="5" fill="#222" />
      </g>
      <text x="549" y="186" textAnchor="middle" dominantBaseline="central" strokeWidth="4" paintOrder="stroke" className="fill-[#111111] stroke-white text-[28px] font-medium">서울특별시청</text>
      <rect x="1088" y="692" width="43" height="28" fill="#fdf5cf" stroke="#857257" strokeWidth="2" />
      <text x="1109" y="705" textAnchor="middle" dominantBaseline="central" className="fill-[#4f4532] text-[20px]">23</text>
    </svg>
  );
}

function Pin({ name, x, y }: { name: string; x: number; y: number }) {
  return (
    <button
      type="button"
      aria-label={name}
      className="absolute h-[96px] w-[72px] -translate-x-1/2 -translate-y-full cursor-pointer"
      style={{ left: `${(x / 1220) * 100}%`, top: `${(y / 800) * 100}%` }}
    >
      <svg viewBox="0 0 72 96" className="h-full w-full overflow-visible text-[#5cc5b5] drop-shadow-[0_0_2px_rgba(0,0,0,0.3)]">
        <path d="M36 97C34 85 28 76 14 62A35 35 0 1 1 58 62C44 76 38 85 36 97z" fill="#63d9c7" />
        <circle cx="36" cy="36" r="24" fill="#3eb5a5" opacity="0.5" />
        <circle cx="36" cy="35" r="23" fill="#fff" />
        <svg x="21" y="25" width="30" height="20" viewBox="0 0 78 50" fill="none" stroke="currentColor" strokeWidth="4">
          <path d="M3 3H75L72 11 39 14 6 11zM6 11L8 40 39 48 70 40 72 11M39 4V47" />
        </svg>
      </svg>
    </button>
  );
}

function StoreMap() {
  const [view, setView] = useState('map');

  return (
    <section aria-label="Store map" className="relative h-[800px] overflow-hidden rounded-[20px] font-['Noto_Sans_CJK_KR',sans-serif]">
      <MapDrawing />
      {pins.map((pin) => (
        <Pin key={pin.name} {...pin} />
      ))}

      {/* Full screen */}
      <button type="button" aria-label="Full screen" className="absolute top-2.5 left-2.5 flex size-16 items-center justify-center rounded-lg bg-black text-white">
        <svg className="size-12" viewBox="0 0 48 48" fill="none" stroke="currentColor" strokeWidth="4">
          <path d="M2 17V2H17M31 2H46V17M46 31V46H31M17 46H2V31M3 3L20 20M45 3L28 20M45 45L28 28M3 45L20 28" />
        </svg>
      </button>

      {/* Map type */}
      <div className="absolute top-1.5 right-1.5 flex h-[72px] w-[220px] items-center rounded-md bg-white p-1 text-2xl shadow-[0_2px_6px_rgba(0,0,0,0.35)]">
        <button
          type="button"
          onClick={() => setView('map')}
          className={view === 'map' ? 'h-16 w-[86px] rounded-md border border-[#3f84ea] bg-[#5294f7] pb-1 font-bold text-white' : 'h-16 w-[86px] pb-1 text-black'}
        >
          지도
        </button>
        <button
          type="button"
          onClick={() => setView('sky')}
          className={view === 'sky' ? 'h-16 flex-1 rounded-md border border-[#3f84ea] bg-[#5294f7] pb-1 font-bold text-white' : 'h-16 flex-1 pb-1 text-black'}
        >
          스카이뷰
        </button>
      </div>

      {/* My position */}
      <button type="button" aria-label="My position" className="absolute top-[90px] right-1.5 flex size-[68px] items-center justify-center rounded-md bg-white shadow-[0_3px_5px_rgba(0,0,0,0.6)]">
        <svg className="size-11 text-black" viewBox="0 0 44 44" fill="none" stroke="currentColor" strokeWidth="3">
          <circle cx="22" cy="22" r="18" />
          <circle cx="22" cy="22" r="6" fill="currentColor" stroke="none" />
          <path d="M22 0V9M22 35V44M0 22H9M35 22H44" />
        </svg>
      </button>

      {/* Scale */}
      <div className="absolute bottom-3 left-5 flex items-center gap-2 text-black">
        <div className="mt-1 h-3 w-[116px] border-4 border-t-0 border-black" />
        <span className="text-lg font-medium">2km</span>
        <span className="ml-1.5 text-2xl">kakao</span>
      </div>
    </section>
  );
}

function Header() {
  return (
    <header className="border-b-2 border-[#d5d5d5] px-[60px]">
      <div className="flex items-center justify-between pt-[34px]">
        <a href="#" aria-label="BOXFUL" className="flex items-center gap-3.5">
          <BoxMark className="h-[50px] w-[78px] text-[#58c3b1]" stroke={4} />
          <span className="flex items-center gap-3 pb-2 font-['Lato',sans-serif] text-[42px] leading-none font-bold text-black">
            {'BOXFUL'.split('').map((letter) => (
              <span key={letter}>{letter}</span>
            ))}
          </span>
        </a>
        <div className="flex gap-3.5 text-[26px]">
          <button type="button" className="h-16 w-[126px] rounded-2xl border-4 border-[#58c3b1] font-semibold text-[#58c3b1]">Log in</button>
          <button type="button" className="h-16 w-[121px] rounded-2xl border-4 border-[#555555] pb-1 font-['Noto_Sans_CJK_KR',sans-serif] font-medium text-[#2d2d2d]">한국어</button>
        </div>
      </div>
      <nav className="flex justify-between px-0.5 pt-12 pb-8 text-[29px] leading-[38px] text-[#2d2d2d]">
        {menu.map((item) => (
          <a key={item} href="#">{item}</a>
        ))}
      </nav>
    </header>
  );
}

function BranchCard({ branch }: { branch: Branch }) {
  const [local, japanese, rest] = branch.name;

  return (
    <article className="h-[250px] rounded-[20px] bg-white px-[30px] pt-12 shadow-[0_0_14px_rgba(0,0,0,0.14)]">
      <div className="flex items-center justify-between">
        <h2 className="text-[32px] leading-[50px] font-medium tracking-tighter text-black">
          {local}
          <span className="text-[28px] font-normal">{japanese}</span>
          {rest}
        </h2>
        <span className="h-10 w-[120px] rounded-[20px] bg-[#5ac3b2] text-center text-xl leading-10 text-white">{branch.distance}</span>
      </div>
      <p className="mt-4 text-[28px] leading-10 tracking-tighter text-[#858585]">{branch.address}</p>
      <ul className="mt-2 flex gap-3 pl-2.5 text-[22px] leading-10 tracking-tighter text-[#666666]">
        {branch.features.map((feature) => (
          <li key={feature} className="flex items-center gap-2">
            <svg className="size-[22px]" viewBox="0 0 22 22" fill="none" stroke="currentColor" strokeWidth="2">
              <path d="M1 10L8 17 21 3" />
            </svg>
            {feature}
          </li>
        ))}
      </ul>
    </article>
  );
}

export default function App() {
  const [query, setQuery] = useState('');

  return (
    <div className="h-screen overflow-hidden bg-white pr-1.5 font-['Inter',sans-serif]">
      <div className="mx-auto min-h-screen max-w-[1300px] bg-white shadow-[0_0_20px_rgba(0,0,0,0.2)]">
        <Header />
        <main className="px-10 font-['Noto_Sans_CJK_KR','Noto_Sans_CJK_JP',sans-serif]">
          <h1 className="pt-[84px] pb-[63px] text-[56px] leading-20 tracking-tighter text-black">Self Storage Near Me</h1>
          <StoreMap />
          <form className="mt-10 flex h-24 items-center rounded-lg border-2 border-[#e2e2e2] pr-6 pl-5" onSubmit={(e) => e.preventDefault()}>
            <input
              type="text"
              aria-label="Location or branch name"
              placeholder="Location · Branch name"
              value={query}
              onChange={(e) => setQuery(e.target.value)}
              className="h-full flex-1 text-[28px] text-black placeholder:text-[#d5d5d5] focus:outline-none"
            />
            <button type="submit" aria-label="Search" className="text-[#808080]">
              <svg className="size-11" viewBox="0 0 44 44" fill="none" stroke="currentColor" strokeWidth="3" strokeLinecap="round">
                <circle cx="20" cy="20" r="16.500" />
                <path d="M32 32L41 41" />
              </svg>
            </button>
          </form>
          <div className="mt-5 flex flex-col gap-5">
            {branches.map((branch) => (
              <BranchCard key={branch.address} branch={branch} />
            ))}
          </div>
        </main>
      </div>
    </div>
  );
}
